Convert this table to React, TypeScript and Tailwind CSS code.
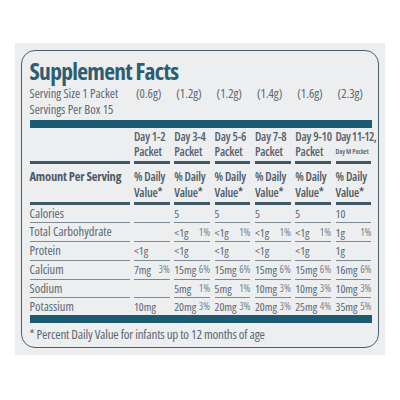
import React from "react";

type Cell = [string, string] | null;

interface Row {
  label: string;
  cells: Cell[];
}

const days = ["Day 1-2", "Day 3-4", "Day 5-6", "Day 7-8", "Day 9-10"];
const weights = ["(0.6g)", "(1.2g)", "(1.2g)", "(1.4g)", "(1.6g)", "(2.3g)"];

const rows: Row[] = [
  { label: "Calories", cells: [null, ["5", ""], ["5", ""], ["5", ""], ["5", ""], ["10", ""]] },
  { label: "Total Carbohydrate", cells: [null, ["<1g", "1%"], ["<1g", "1%"], ["<1g", "1%"], ["<1g", "1%"], ["1g", "1%"]] },
  { label: "Protein", cells: [["<1g", ""], ["<1g", ""], ["<1g", ""], ["<1g", ""], ["<1g", ""], ["1g", ""]] },
  { label: "Calcium", cells: [["7mg", "3%"], ["15mg", "6%"], ["15mg", "6%"], ["15mg", "6%"], ["15mg", "6%"], ["16mg", "6%"]] },
  { label: "Sodium", cells: [null, ["5mg", "1%"], ["5mg", "1%"], ["10mg", "3%"], ["10mg", "3%"], ["10mg", "3%"]] },
  { label: "Potassium", cells: [["10mg", ""], ["20mg", "3%"], ["20mg", "3%"], ["20mg", "3%"], ["25mg", "4%"], ["35mg", "5%"]] },
];

// shared column template so every block lines up
const grid = "grid grid-cols-[100px_repeat(6,minmax(0,1fr))] gap-x-[4.4px]";

export default function App() {
  return (
    <div className="w-[400px] h-[400px] bg-white pt-[43px] pl-[15px] font-['Open_Sans',sans-serif] font-stretch-[75%]">
      <div className="w-[370px] h-[312px] bg-[#eceef0] pt-[7px] pl-[6px]">
        <div className="w-[358px] h-[298px] border-[1.5px] border-[#4b5f6a] rounded-[14px] pl-[7.5px] pt-[4.5px]">
          <div className="w-[342px]">
            {/* Title */}
            <div className="text-[23.5px] leading-[30px] font-bold tracking-[-0.7px] text-[#2e5c70]">
              Supplement Facts
            </div>

            {/* Serving info */}
            <div className={`${grid} text-[12.5px] leading-[16px] text-[#5c6770]`}>
              <div className="whitespace-nowrap">Serving Size 1 Packet</div>
              {weights.map((w, i) => (
                <div key={i} className="pl-[2px]">{w}</div>
              ))}
            </div>
            <div className="text-[12.5px] leading-[16px] text-[#5c6770]">Servings Per Box 15</div>

            <div className="mt-[2px] h-[8px] bg-[#1d5b73]" />

            {/* Column headers */}
            <div className={`${grid} text-[12px] leading-[15px] tracking-[-0.2px] font-semibold text-[#56616b]`}>
              <div className="border-b-[3px] border-[#3f5866]" />
              {days.map((d) => (
                <div key={d} className="pt-[1px] pb-[2px] border-b-[3px] border-[#3f5866]">
                  <div className="whitespace-nowrap">{d}</div>
                  <div>Packet</div>
                </div>
              ))}
              <div className="pt-[1px] pb-[2px] border-b-[3px] border-[#3f5866]">
                <div className="whitespace-nowrap tracking-[-0.6px]">Day 11-12,</div>
                <div className="text-[7px] leading-[15px] tracking-[-0.1px] whitespace-nowrap">Day M Packet</div>
              </div>
            </div>

            <div className={`${grid} text-[12px] leading-[16px] font-semibold text-[#4f5a64]`}>
              <div className="pt-[5px] pb-[1px] border-b-[3px] border-[#3f5866] tracking-[-0.2px] text-[12.5px] font-bold whitespace-nowrap">
                Amount Per Serving
              </div>
              {weights.map((_, i) => (
                <div key={i} className="pt-[5px] pb-[1px] border-b-[3px] border-[#3f5866] tracking-[-0.2px] whitespace-nowrap">
                  <div>% Daily</div>
                  <div>Value*</div>
                </div>
              ))}
            </div>

            {/* Nutrient rows */}
            {rows.map((r, ri) => {
              const last = ri === rows.length - 1;
              const line = last ? "h-[17px]" : "h-[18.8px] border-b border-[#7d8a93]";
              return (
                <div key={r.label} className={`${grid} text-[#5c6770]`}>
                  <div className={`${line} text-[12.5px] leading-[17px] whitespace-nowrap`}>{r.label}</div>
                  {r.cells.map((c, ci) => (
                    <div key={ci} className={`${line} flex justify-between items-center text-[11.5px] leading-[17px] whitespace-nowrap`}>
                      <span>{c ? c[0] : ""}</span>
                      <span className="text-[10.5px] text-[#7a858e]">{c ? c[1] : ""}</span>
                    </div>
                  ))}
                </div>
              );
            })}

            <div className="h-[7.5px] bg-[#1d5b73]" />

            <div className="mt-[2px] text-[13px] leading-[18px] tracking-[-0.2px] text-[#5c6770] whitespace-nowrap">
              * Percent Daily Value for infants up to 12 months of age
            </div>
          </div>
        </div>
      </div>
    </div>
  );
}
